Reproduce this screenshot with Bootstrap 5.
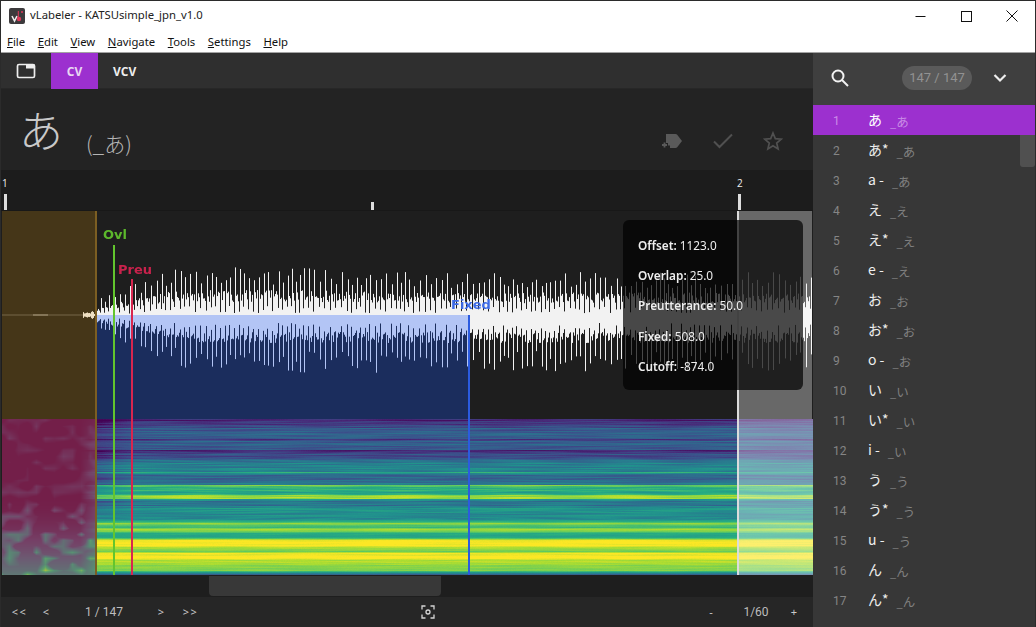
<!DOCTYPE html>
<html lang="en">

<head>
    <meta charset="UTF-8">
    <meta name="viewport" content="width=device-width, initial-scale=1.0">
    <title>vLabeler</title>
    <link href="https://cdn.jsdelivr.net/npm/bootstrap@5.3.0/dist/css/bootstrap.min.css" rel="stylesheet">
    <style>
        html, body { height: 100%; overflow: hidden; background: #fff; }
        body { font-family: "Noto Sans", "Noto Sans CJK JP", sans-serif; }
        .app-window { width: 1036px; height: 627px; border: 1px solid #2b2b2b; border-bottom: 0; overflow: hidden; background: #fff; }
        .title-bar { height: 29px; font-size: 11.3px; color: #222; padding-left: 8px; }
        .title-bar svg.app-logo { margin-right: 5px; }
        .win-btn { width: 45px; }
        .win-btn-wide { width: 46px; }
        .menu-bar { height: 23px; font-size: 11.3px; color: #111; padding-left: 6px; gap: 12.6px; border-bottom: 1px solid #a3a3a3; line-height: 23px; }
        .workspace { height: 574px; }
        .editor-col { width: 812px; background: #1e1e1e; }
        .tab-bar { height: 36px; background: #2f2f2f; border-bottom: 1px solid #272727; }
        .tab-btn { height: 36px; padding: 2px 15px 0; border: 0; border-radius: 0; font-size: 12px; font-weight: 700; color: #eee; font-family: "Open Sans", sans-serif; line-height: 34px; }
        .tab-btn:hover { color: #eee; }
        .tab-icon { width: 50px; }
        .tab-on { width: 47px; background: #9c30cf; color: #e9d8f3; }
        .tab-on:hover { background: #9c30cf; color: #e9d8f3; }
        .entry-head { height: 81px; background: #232323; padding: 0 21px 0 18px; }
        .entry-kana { font-family: "Noto Sans CJK JP", sans-serif; font-weight: 300; font-size: 44px; color: #c9c9c9; line-height: 1; margin-bottom: 19px; }
        .entry-sub { font-family: "Noto Sans CJK JP", sans-serif; font-weight: 300; font-size: 21px; color: #b5b5b5; margin-left: 23px; margin-bottom: 16px; line-height: 1; }
        .head-tools { gap: 30px; margin-bottom: 19px; padding-right: 9px; }
        .ruler { height: 40px; background: #1c1c1c; }
        .ruler-num { position: absolute; top: 6px; font-size: 10px; color: #eee; font-family: "Open Sans", sans-serif; line-height: 14px; }
        .ruler-tick { position: absolute; bottom: 0; width: 3px; height: 16px; background: #ddd; }
        .chart-box { height: 365px; }
        .chart-box canvas { display: block; }
        .mark-label { position: absolute; font-family: "DejaVu Sans", sans-serif; font-weight: 700; font-size: 13px; line-height: 14px; }
        .info-tip { position: absolute; left: 622px; top: 10px; width: 180px; height: 170px; border-radius: 6px; background: rgba(0, 0, 0, .7); padding: 10px 15px; color: #eee; font-size: 11.8px; line-height: 30.2px; }
        .info-tip b { font-weight: 600; }
        .hscroll { height: 22px; padding: 1px 0 1px 208px; background: #1e1e1e; }
        .hscroll-thumb { width: 232px; height: 20px; background: #383838; border-radius: 0 0 4px 4px; }
        .nav-strip { height: 30px; background: #262626; color: #c9c9c9; font-size: 11px; }
        .nav-cell { text-align: center; }
        .nav-arrow { letter-spacing: 1.5px; }
        .page-num { font-size: 12px; color: #bdbdbd; font-family: "Roboto", sans-serif; }
        .side-col { width: 222px; background: #373737; }
        .side-head { height: 52px; background: #3f3f3f; padding-left: 17px; padding-bottom: 2px; }
        .count-pill { width: 70px; height: 24px; margin-left: 52px; margin-right: 21px; padding: 0; line-height: 24px; font-size: 13px; font-weight: 400; background: #5a5a5a; color: #929292; font-family: "Roboto", sans-serif; }
        .entry-list { overflow: hidden; }
        .entry-row { height: 30px; padding: 1px 0 0; border: 0; border-radius: 0; background: #373737; color: #eee; align-items: center; display: flex; font-family: "Roboto", "Noto Sans CJK JP", sans-serif; }
        .entry-row.active { background: #9c30cf; border: 0; margin-top: 0; }
        .entry-num { width: 55px; padding-left: 20px; font-size: 12px; color: #858585; font-family: "Roboto", sans-serif; }
        .entry-row.active .entry-num { color: #cc8ae8; }
        .entry-name { font-size: 14px; margin-right: 8px; margin-top: -2px; font-family: "Noto Sans CJK JP", sans-serif; }
        .entry-alias { font-size: 12.5px; color: #808080; font-family: "Noto Sans CJK JP", sans-serif; margin-top: 4px; }
        .entry-alias i { font-style: normal; font-size: 11px; }
        .entry-row.active .entry-alias { color: #c98be6; }
        .list-thumb { position: absolute; right: 0; top: 0; width: 15px; height: 62px; background: rgba(255, 255, 255, .13); border-radius: 0 0 3px 3px; }
    </style>
</head>

<body>
    <div class="app-window d-flex flex-column">
        <div class="title-bar d-flex align-items-center flex-shrink-0">
            <svg class="app-logo" width="16" height="16" viewBox="0 0 16 16">
                <rect width="16" height="16" rx="2" fill="#3c3a3c" />
                <path d="M3 8l2.5 5L8 8" fill="none" stroke="#eee" stroke-width="1.6" />
                <path d="M9.3 3v7" stroke="#e0395a" stroke-width="1" />
                <circle cx="10" cy="11" r="2.2" fill="#e0395a" />
                <circle cx="13" cy="4" r="1" fill="#e0395a" />
            </svg>
            <span>vLabeler - KATSUsimple_jpn_v1.0</span>
            <div class="ms-auto d-flex me-0">
                <div class="win-btn text-center"><svg width="11" height="11" viewBox="0 0 11 11"><path d="M0.5 5.5h10" stroke="#111" /></svg></div>
                <div class="win-btn-wide text-center"><svg width="11" height="11" viewBox="0 0 11 11"><rect x=".5" y=".5" width="10" height="10" fill="none" stroke="#111" /></svg></div>
                <div class="win-btn-wide text-center"><svg width="12" height="12" viewBox="0 0 12 12"><path d="M.5.5l11 11M11.5.5l-11 11" stroke="#111" /></svg></div>
            </div>
        </div>
        <div class="menu-bar d-flex flex-shrink-0">
            <span><u>F</u>ile</span><span><u>E</u>dit</span><span><u>V</u>iew</span><span><u>N</u>avigate</span><span><u>T</u>ools</span><span><u>S</u>ettings</span><span><u>H</u>elp</span>
        </div>

        <div class="workspace d-flex">
            <div class="editor-col d-flex flex-column">
                <div class="tab-bar d-flex flex-shrink-0">
                    <button type="button" class="btn tab-btn tab-icon d-flex align-items-center justify-content-center p-0">
                        <svg width="20" height="16" viewBox="0 0 20 16">
                            <rect x="1.5" y="1.5" width="17" height="13" rx="1.5" fill="none" stroke="#eee" stroke-width="1.7" />
                            <rect x="10" y="1.5" width="8.5" height="4" fill="#eee" />
                        </svg>
                    </button>
                    <button type="button" class="btn tab-btn tab-on">CV</button>
                    <button type="button" class="btn tab-btn">VCV</button>
                </div>
                <div class="entry-head d-flex align-items-end flex-shrink-0">
                    <span class="entry-kana">あ</span>
                    <span class="entry-sub">(_あ)</span>
                    <div class="head-tools ms-auto d-flex align-items-center">
                        <svg width="22" height="16" viewBox="0 0 22 16">
                            <path d="M5 1h9.5c.7 0 1.3.3 1.7.8L21 8l-4.800 6.200c-.4.5-1 .8-1.700.8H9v-2.500H7V10H5z" fill="#5a5a5a" />
                            <path d="M3.500 9.500v5M1 12h5" stroke="#5a5a5a" stroke-width="1.800" />
                        </svg>
                        <svg width="20" height="16" viewBox="0 0 20 16"><path d="M1 8.500l5.500 5.500L19 1.500" fill="none" stroke="#505050" stroke-width="2" /></svg>
                        <svg width="20" height="20" viewBox="0 0 20 20"><path d="M10 2l2.300 5.600 6 .5-4.600 3.900 1.400 5.900L10 14.800l-5.100 3.100 1.400-5.900L1.700 8.100l6-.5z" fill="none" stroke="#505050" stroke-width="1.700" /></svg>
                    </div>
                </div>
                <div class="ruler position-relative flex-shrink-0">
                    <span class="ruler-num" style="left: 1px">1</span>
                    <span class="ruler-tick" style="left: 3px"></span>
                    <span class="ruler-tick" style="left: 370px; height: 8px"></span>
                    <span class="ruler-num" style="left: 736px">2</span>
                    <span class="ruler-tick" style="left: 737px"></span>
                </div>
                <div class="chart-box position-relative flex-shrink-0">
                    <canvas id="chart" width="812" height="365"></canvas>
                    <span class="mark-label" style="left: 102px; top: 18px; color: #5cb82c">Ovl</span>
                    <span class="mark-label" style="left: 117px; top: 53px; color: #c9224c">Preu</span>
                    <span class="mark-label" style="left: 450px; top: 88px; color: #3c6ae6">Fixed</span>
                    <div class="info-tip">
                        <div><b>Offset:</b> 1123.0</div>
                        <div><b>Overlap:</b> 25.0</div>
                        <div><b>Preutterance:</b> 50.0</div>
                        <div><b>Fixed:</b> 508.0</div>
                        <div><b>Cutoff:</b> -874.0</div>
                    </div>
                </div>
                <div class="hscroll flex-shrink-0"><div class="hscroll-thumb"></div></div>
                <div class="nav-strip d-flex align-items-center flex-shrink-0">
                    <span class="nav-cell nav-arrow" style="width: 37px">&lt;&lt;</span>
                    <span class="nav-cell" style="width: 16px">&lt;</span>
                    <span class="nav-cell page-num" style="width: 100px">1 / 147</span>
                    <span class="nav-cell" style="width: 14px">&gt;</span>
                    <span class="nav-cell nav-arrow" style="width: 45px">&gt;&gt;</span>
                    <span class="nav-cell d-flex justify-content-center" style="width: 429px">
                        <svg width="14" height="14" viewBox="0 0 14 14" fill="none" stroke="#d5d5d5" stroke-width="1.300">
                            <path d="M1 4.500V1h3.500M9.500 1H13v3.500M13 9.500V13H9.500M4.500 13H1V9.500" />
                            <circle cx="7" cy="7" r="2" />
                        </svg>
                    </span>
                    <span class="nav-cell ms-auto" style="width: 52px">-</span>
                    <span class="nav-cell page-num" style="width: 38px">1/60</span>
                    <span class="nav-cell" style="width: 38px">+</span>
                </div>
            </div>

            <aside class="side-col d-flex flex-column">
                <div class="side-head d-flex align-items-center flex-shrink-0">
                    <svg width="20" height="20" viewBox="0 0 20 20" fill="none" stroke="#f2f2f2" stroke-width="2">
                        <circle cx="8" cy="8" r="5.500" />
                        <path d="M12 12l6 6" />
                    </svg>
                    <span class="badge rounded-pill count-pill">147 / 147</span>
                    <svg width="14" height="10" viewBox="0 0 14 10" fill="none" stroke="#eee" stroke-width="2.200"><path d="M1.500 2l5.500 5.500L12.500 2" /></svg>
                </div>
                <div class="position-relative flex-grow-1 overflow-hidden">
                    <div class="list-group list-group-flush entry-list" id="entryList"></div>
                    <div class="list-thumb"></div>
                </div>
            </aside>
        </div>
    </div>

    <script src="https://cdn.jsdelivr.net/npm/bootstrap@5.3.0/dist/js/bootstrap.bundle.min.js"></script>
    <script>
        // sidebar entries
        const entries = [
            ['あ', 'あ'], ['あ*', 'あ'], ['a -', 'あ'],
            ['え', 'え'], ['え*', 'え'], ['e -', 'え'],
            ['お', 'お'], ['お*', 'お'], ['o -', 'お'],
            ['い', 'い'], ['い*', 'い'], ['i -', 'い'],
            ['う', 'う'], ['う*', 'う'], ['u -', 'う'],
            ['ん', 'ん'], ['ん*', 'ん']
        ];
        document.getElementById('entryList').innerHTML = entries.map((e, i) => `
            <div class="list-group-item entry-row ${i === 0 ? 'active' : ''}">
                <span class="entry-num">${i + 1}</span>
                <span class="entry-name">${e[0]}</span>
                <span class="entry-alias"><i>_</i>${e[1]}</span>
            </div>`).join('');

        // seeded random so that every render is the same
        let seed = 12345;
        function rnd() {
            seed = (seed * 1664525 + 1013904223) >>> 0;
            return seed / 4294967296;
        }

        const canvas = document.getElementById('chart');
        const ctx = canvas.getContext('2d');
        const ORIGIN_X = 1, ORIGIN_Y = 210; // canvas corner in page pixels
        const MID = 315, SPEC_TOP = 419, SPEC_BOTTOM = 575;

        ctx.translate(-ORIGIN_X, -ORIGIN_Y);
        ctx.fillStyle = '#1e1e1e';
        ctx.fillRect(0, 210, 813, 365);
        ctx.fillStyle = '#181818';
        ctx.fillRect(0, 210, 813, 1);

        function level(x, a, b, x0, x1) {
            if (x <= x0) return a;
            if (x >= x1) return b;
            return a + (b - a) * (x - x0) / (x1 - x0);
        }

        function drawWave() {
            ctx.fillStyle = '#f2f2f2';
            // quiet lead-in
            for (let x = 2; x < 95; x++) {
                let h = 0.5, a = .3;
                if (x > 32 && x < 48) a = .75;
                if (x > 82) { h = 1 + rnd() * 3; a = 1; }
                ctx.globalAlpha = a;
                ctx.fillRect(x, MID - h, 1, h * 2);
            }
            ctx.globalAlpha = 1;
            // comb of pitch periods, about 5 px each: tall tooth, shoulders, deep slit
            let next = 95, step = 0;
            for (let x = 95; x < 812; x++) {
                if (x >= next) {
                    step = 0;
                    next = x + 4 + Math.floor(rnd() * 3);
                } else {
                    step++;
                }
                const slit = x === next - 1;
                const growUp = level(x, .3, 1, 95, 175);
                const growDown = level(x, .25, 1, 95, 195);
                const tail = level(x, 1, .9, 300, 430);
                let up, down;
                if (step === 0) {
                    up = 30 + rnd() * 18;
                    down = 36 + rnd() * 22;
                } else if (slit) {
                    up = 2 + rnd() * 7;
                    down = 8 + rnd() * 10;
                } else {
                    up = 13 + rnd() * 12;
                    down = 17 + rnd() * 11;
                }
                up *= growUp * tail;
                down *= growDown;
                ctx.fillRect(x, MID - up, 1, up + down);
            }
        }

        // approximate viridis
        const viridis = [[68, 1, 84], [71, 44, 122], [59, 81, 139], [44, 113, 142], [33, 144, 141], [39, 173, 129], [92, 200, 99], [170, 220, 50], [253, 231, 37]];
        function colour(v) {
            v = Math.max(0, Math.min(.999, v)) * (viridis.length - 1);
            const i = Math.floor(v), f = v - i;
            return viridis[i].map((c, k) => c + (viridis[i + 1][k] - c) * f);
        }

        // brightness of the horizontal bands, [page y, value]
        const bands = [[419, .1], [425, .17], [428, .28], [438, .33], [439, .12], [441, .3], [449, .3], [450, .06], [452, .22], [458, .25], [460, .42], [471, .46], [472, .6], [473, .44], [476, .33], [481, .33], [484, .42], [485, .8], [487, .62], [494, .6], [495, .82], [498, .82], [499, .5], [502, .36], [505, .4], [507, .5], [515, .5], [518, .46], [521, .62], [523, .82], [525, .72], [527, .68], [529, .88], [531, .8], [533, .6], [537, .6], [540, .99], [545, 1], [547, .9], [549, .84], [551, .76], [553, .98], [558, 1], [560, .88], [563, .88], [565, .82], [570, .8], [572, .55], [574, .32], [575, .3]];
        function bandValue(y) {
            for (let i = 1; i < bands.length; i++) {
                if (y <= bands[i][0]) {
                    const a = bands[i - 1], b = bands[i];
                    return a[1] + (b[1] - a[1]) * (y - a[0]) / (b[0] - a[0]);
                }
            }
            return .3;
        }

        // coarse interpolated noise for the soft blobs before the onset
        const blobGrid = [];
        for (let i = 0; i < 400; i++) blobGrid.push(rnd());
        function blobNoise(x, y) {
            const gx = x / 9, gy = y / 6;
            const ix = Math.floor(gx), iy = Math.floor(gy), fx = gx - ix, fy = gy - iy;
            const at = (a, b) => blobGrid[(a * 17 + b * 29) % 400];
            const top = at(ix, iy) * (1 - fx) + at(ix + 1, iy) * fx;
            const bottom = at(ix, iy + 1) * (1 - fx) + at(ix + 1, iy + 1) * fx;
            return top * (1 - fy) + bottom * fy;
        }

        function drawSpectrogram() {
            const w = 812, h = SPEC_BOTTOM - SPEC_TOP;
            const img = ctx.createImageData(w, h);
            for (let y = 0; y < h; y++) {
                const py = SPEC_TOP + y;
                const amount = py < 520 ? .1 : .04;
                const base = bandValue(py) + (rnd() - .5) * amount;
                // every row wanders slowly along time on its own
                const phase = rnd() * 6.28, speed = .02 + rnd() * .05;
                for (let i = 0; i < w; i++) {
                    const x = i + ORIGIN_X;
                    let v = base + Math.sin(x * speed + phase) * amount * .45 + (rnd() - .5) * .015;
                    if (x < 96) {
                        // near silence before the onset, soft blobs low down
                        const low = Math.max(0, (py - 495) / 80);
                        const blob = blobNoise(x, py);
                        v = low * low * .4 + Math.max(0, blob - .52) * (.22 + low * .9);
                        if (x > 80) v += (x - 80) / 16 * (bandValue(py) * .25);
                    } else if (x < 135 && py < 515) {
                        v -= (135 - x) / 40 * .12;
                    }
                    let c = colour(v);
                    if (x < 96 && x >= 2) {
                        c = c.map((n, k) => n * .75 + [255, 120, 40][k] * .25);
                    } else if (x >= 738) {
                        c = c.map(n => n * .67 + 255 * .33);
                    }
                    const p = (y * w + i) * 4;
                    img.data[p] = c[0];
                    img.data[p + 1] = c[1];
                    img.data[p + 2] = c[2];
                    img.data[p + 3] = 255;
                }
            }
            ctx.putImageData(img, 0, SPEC_TOP - ORIGIN_Y);
        }

        drawWave();

        // offset region
        ctx.fillStyle = 'rgba(225, 150, 0, .2)';
        ctx.fillRect(2, 211, 93, SPEC_TOP - 211);
        // fixed region, lower half only
        ctx.fillStyle = 'rgba(23, 86, 255, .283)';
        ctx.fillRect(96, MID, 373, SPEC_TOP - MID);
        // cutoff region
        ctx.fillStyle = 'rgba(255, 255, 255, .33)';
        ctx.fillRect(738, 211, 74, SPEC_TOP - 211);

        drawSpectrogram();

        ctx.fillStyle = '#1e1e1e';
        ctx.fillRect(0, 419, 2, 156);

        // marker lines
        ctx.fillStyle = '#7c5e22';
        ctx.fillRect(95, 211, 2, 364);
        ctx.fillStyle = '#62c52e';
        ctx.fillRect(113, 245, 2, 330);
        ctx.fillStyle = '#d8264f';
        ctx.fillRect(131, 279, 2, 296);
        ctx.fillStyle = '#2b5be0';
        ctx.fillRect(468, 315, 2, 260);
        ctx.fillStyle = '#dcdcdc';
        ctx.fillRect(737, 211, 2, 364);
    </script>
</body>

</html>
